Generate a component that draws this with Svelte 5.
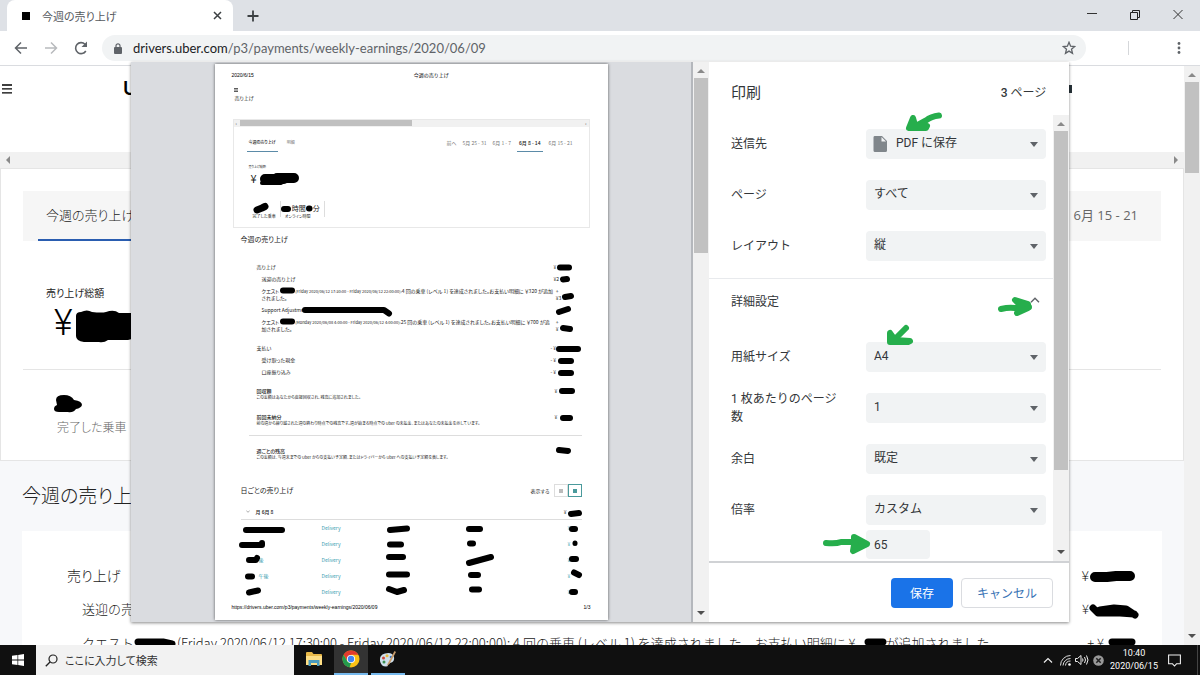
<script>
  const basicSettings = [
    { id: 'dest', label: '送信先', value: 'PDF に保存', icon: true },
    { id: 'pages', label: 'ページ', value: 'すべて' },
    { id: 'layout', label: 'レイアウト', value: '縦' }
  ];
  const advancedSettings = [
    { id: 'paper', label: '用紙サイズ', value: 'A4' },
    { id: 'persheet', label: '1 枚あたりのページ数', value: '1' },
    { id: 'margin', label: '余白', value: '既定' },
    { id: 'scale', label: '倍率', value: 'カスタム' }
  ];
  const trips = ['', '', '後', '午後', ''];

  // Redaction strokes: [path, stroke width]
  const sheetMarks = [
    ['M265 179 H284 M277 178 H294', 10], ['M262 183 H281', 4],
    ['M257 210 L262 208 L265 206.500', 7], ['M284 209 H288', 6], ['M309 208.500 h0.500', 6],
    ['M560 267.500 H569', 6], ['M563 279.500 L567 279', 6], ['M283 290.500 H292', 6],
    ['M565 297 L571 296', 6], ['M305 310 H384 L389 313.500', 6], ['M559 312 L568 309', 6],
    ['M283 321.500 H292', 6], ['M563 328 L570 329', 6], ['M559 349 H578', 6],
    ['M561 361 H571', 6], ['M561 373 H571', 6], ['M562 391 H572', 6],
    ['M563 418 H570', 6], ['M559 450 L568 451', 6], ['M571 514 L579 513', 6],
    ['M246 530 H282', 6], ['M242 545 H262 V543', 6], ['M249 560 H256 L257 558', 6],
    ['M248 576.500 H252', 6], ['M249 592.500 L258 590.500', 6],
    ['M390 530 L407 528.500', 6], ['M390 544.500 H401', 6], ['M389 557 H403', 6],
    ['M389 574.500 H407', 6], ['M389 589 L397 592 L404 590', 6],
    ['M469 529 H480', 6], ['M470 543.500 H473', 6], ['M469 563 L480 560 L491 557', 6],
    ['M471 575 H478', 6], ['M472 589.500 H479', 6],
    ['M572 529 H575', 6], ['M575 543 v0.500', 5], ['M572 559 H576', 6],
    ['M574 572.500 L579 575', 6], ['M572 592 L575 592', 6]
  ];
</script>

{#snippet tri(dir, color)}
  <svg class="tri {dir}" width="8" height="8" viewBox="0 0 8 8" aria-hidden="true"><path d="M0 6 4 2l4 4z" fill={color} /></svg>
{/snippet}

{#snippet field(s)}
  <div class="field">
    <label for={s.id}>{s.label}</label>
    <div class="pick" class:with-icon={s.icon}>
      {#if s.icon}
        <svg class="doc" width="14" height="16" viewBox="0 0 14 16" aria-hidden="true"><path d="M2 0h7l5 5v9.500a1.500 1.500 0 0 1-1.500 1.500h-10.500a1.500 1.500 0 0 1-1.500-1.500v-13a1.500 1.500 0 0 1 1-1.500z" fill="#80868b" /><path d="M8.500 1v4.500h4.500z" fill="#f1f3f4" /></svg>
      {/if}
      <select id={s.id}><option>{s.value}</option></select>
      <svg class="caret" width="8" height="5" viewBox="0 0 8 5" aria-hidden="true"><path d="M0 0h8L4 5z" fill="#5f6368" /></svg>
    </div>
  </div>
{/snippet}

<div class="screen">
  <header>
    <div class="tabstrip">
      <div class="tab">
        <span class="favicon"></span>
        <span class="tab-title">今週の売り上げ</span>
        <button aria-label="タブを閉じる"><svg width="9" height="9" viewBox="0 0 9 9"><path d="M1 1l7 7M8 1l-7 7" stroke="#3c4043" stroke-width="1.500" /></svg></button>
      </div>
      <button class="new-tab" aria-label="新しいタブ"><svg width="12" height="12" viewBox="0 0 12 12"><path d="M6 .5v11M.5 6h11" stroke="#3c4043" stroke-width="1.800" /></svg></button>
      <div class="window-buttons">
        <button aria-label="最小化"><svg width="12" height="12" viewBox="0 0 12 12"><path d="M1 3.500h10" stroke="#333" /></svg></button>
        <button aria-label="元に戻す"><svg width="12" height="12" viewBox="0 0 12 12"><path d="M1.500 2.500h7v7h-7zM3.500 2.500v-2h7v7h-2" fill="none" stroke="#222" /></svg></button>
        <button aria-label="閉じる"><svg width="12" height="12" viewBox="0 0 12 12"><path d="M1.500 0l9 9M10.500 0l-9 9" stroke="#333" /></svg></button>
      </div>
    </div>
    <div class="toolbar">
      <nav>
        <button aria-label="戻る"><svg width="14" height="14" viewBox="0 0 14 14"><path d="M13 7H2M7 1.500 1.500 7 7 12.500" fill="none" stroke="#5f6368" stroke-width="1.500" /></svg></button>
        <button aria-label="進む"><svg width="14" height="14" viewBox="0 0 14 14"><path d="M1 7h11M7 1.500 12.500 7 7 12.500" fill="none" stroke="#b8babd" stroke-width="1.500" /></svg></button>
        <button aria-label="再読み込み"><svg width="14" height="14" viewBox="0 0 14 14"><path d="M11.800 10A5.500 5.500 0 1 1 11 3.200l1 1" fill="none" stroke="#5f6368" stroke-width="1.600" /><path d="M13 .5v5.500H7.500z" fill="#5f6368" /></svg></button>
      </nav>
      <div class="omnibox">
        <svg width="8" height="11" viewBox="0 0 8 11" aria-hidden="true"><rect y="4" width="8" height="7" rx="1" fill="#5f6368" /><path d="M2 4.500V2.800a2 2 0 0 1 4 0v1.700" fill="none" stroke="#5f6368" stroke-width="1.200" /></svg>
        <span class="url"><b>drivers.uber.com</b>/p3/payments/weekly-earnings/2020/06/09</span>
        <button aria-label="ブックマーク"><svg width="14" height="14" viewBox="0 0 14 14"><path d="M7 1.300 8.600 5.200l4.100.3-3.200 2.700 1 4.100L7 10.100l-3.500 2.200 1-4.100-3.200-2.700 4.100-.3z" fill="none" stroke="#5f6368" stroke-width="1.300" /></svg></button>
      </div>
      <span class="sep"></span>
      <button aria-label="メニュー"><svg width="4" height="14" viewBox="0 0 4 14"><g fill="#5f6368"><circle cx="2" cy="2.500" r="1.400" /><circle cx="2" cy="7" r="1.400" /><circle cx="2" cy="11.500" r="1.400" /></g></svg></button>
    </div>
  </header>

  <main class="viewport">
    <div class="site">
      <div class="site-head">
        <svg width="10" height="10" viewBox="0 0 10 10" aria-hidden="true"><path d="M0 1h10M0 4.900h10M0 8.800h10" stroke="#000" stroke-width="1.300" /></svg>
        <span class="logo">U</span>
        <span class="badge"></span>
      </div>
      <div class="hscroll">{@render tri('left', '#8a8a8a')}{@render tri('right', '#8a8a8a')}</div>
      <section class="summary">
        <div class="tabs"><span class="current">今週の売り上げ</span><span class="week">6月 15 - 21</span></div>
        <p class="total-label">売り上げ総額</p>
        <p class="total">¥</p>
        <div class="rides">完了した乗車</div>
      </section>
      <h2>今週の売り上げ</h2>
      <section class="details">
        <div><span>売り上げ</span><span class="yen">¥</span></div>
        <div class="sub"><span>送迎の売り上げ</span><span class="yen">¥</span></div>
        <div class="sub"><span>クエスト<i class="gap"></i>(Friday 2020/06/12 17:30:00 - Friday 2020/06/12 22:00:00): 4 回の乗車 (レベル 1) を達成されました。お支払い明細に ¥<i class="gap short"></i>が追加されました</span><span class="yen">+ ¥</span></div>
      </section>
      <svg class="marks" width="1184" height="579" viewBox="0 66 1184 579" aria-hidden="true">
        <path d="M76 316q0-4 5-4 6-3 11 0 10 1 14 0 8-3 13 1h13v26l-4 1h-20q-4 3-9 2H84q-8-1-8-6z" />
        <path d="M56 400q0-5 8-5 7 0 10 5 8 1 8 5-1 3-6 4-3 4-8 3h-9q-5 0-5-3 0-3 3-4z" />
        <g fill="none" stroke="#000" stroke-linecap="round" stroke-linejoin="round">
          <path stroke-width="10" d="M1095 577h12l9-1h14" />
          <path stroke-width="7" d="M1093 608l5 5h22l14 1M1100 610l14-2 12 1 9 6" />
          <path stroke-width="7" d="M138 642h25l9 2M868 642h15M1112 642l20 0" />
        </g>
      </svg>
    </div>
    <div class="vscroll">{@render tri('up', '#8a8a8a')}<div class="thumb site-thumb"></div>{@render tri('down', '#505050')}</div>
  </main>

  <footer class="taskbar">
    <button class="start" aria-label="スタート"><svg width="12" height="12" viewBox="0 0 12 12"><path d="M0 1.700 5.500 1v4.600H0zM6.200.9 12 0v5.600H6.200zM0 6.400h5.500V11L0 10.300zM6.200 6.400H12V12l-5.800-.9z" fill="#fff" /></svg></button>
    <label class="search">
      <svg width="13" height="13" viewBox="0 0 13 13" aria-hidden="true"><circle cx="8" cy="5" r="4" fill="none" stroke="#222" stroke-width="1.200" /><path d="M5 8 .8 12.200" stroke="#222" stroke-width="1.300" /></svg>
      <input type="text" placeholder="ここに入力して検索" />
    </label>
    <div class="apps">
      <button aria-label="エクスプローラー"><svg width="16" height="14" viewBox="0 0 16 14"><path d="M0 1q0-1 1-1h5l1.500 2H15q1 0 1 1v10H0z" fill="#e9b949" /><path d="M0 4h16v9H0z" fill="#ffdf85" /><path d="M2.500 14V8h11v6H11v-3H5v3z" fill="#4a9bbf" /></svg></button>
      <button class="active" aria-label="Chrome"><svg width="18" height="18" viewBox="0 0 18 18"><circle cx="9" cy="9" r="8.500" fill="#fbc116" /><path d="M1.600 4.800A8.500 8.500 0 0 1 16.400 4.800H9L5.400 11z" fill="#e33b2e" /><path d="M1.600 4.800 5.400 11.200 9 13.200 7.500 17.400A8.500 8.500 0 0 1 1.600 4.800z" fill="#249a4d" /><circle cx="9" cy="9" r="4.100" fill="#fff" /><circle cx="9" cy="9" r="3.200" fill="#4285f4" /></svg></button>
      <button class="open" aria-label="ペイント"><svg width="18" height="18" viewBox="0 0 18 18"><path d="M1 11Q0 5 6 3.500 13 1.500 15 7q1 5-4 6-2 0-2 2 0 1.500-2 1.500-5 0-6-5.500z" fill="#cfe0ec" /><circle cx="4.500" cy="8" r="1.500" fill="#d0493c" /><circle cx="8" cy="5.800" r="1.500" fill="#e8b93e" /><circle cx="5" cy="12" r="1.500" fill="#3c8f53" /><circle cx="12" cy="7" r="1.300" fill="#3976c2" /><path d="M15.500 1 9 13l-1.500 3 3-2L17 2z" fill="#c79b6a" /></svg></button>
    </div>
    <div class="tray">
      <svg class="expand" width="10" height="6" viewBox="0 0 10 6" aria-hidden="true"><path d="M1 5.500 5 1.500l4 4" fill="none" stroke="#eee" stroke-width="1.200" /></svg>
      <svg width="11" height="11" viewBox="0 0 11 11" aria-hidden="true"><g fill="none" stroke="#ddd"><path d="M.5 10.500A10 10 0 0 1 10.500.5M3 10.500A7.500 7.500 0 0 1 10.500 3.500M5.500 10.500a5 5 0 0 1 5-4.500" /></g><circle cx="9.500" cy="9.500" r="1.300" fill="#fff" /></svg>
      <svg width="14" height="12" viewBox="0 0 14 12" aria-hidden="true"><g fill="none" stroke="#eee"><path d="M.5 4.500h2L6 1.500v9l-3.500-3h-2zM7.500 4.500q1 1.500 0 3M9.500 3q2 3 0 6M11.500 1.500q3 4.500 0 9" /></g></svg>
      <svg width="11" height="11" viewBox="0 0 11 11" aria-hidden="true"><circle cx="5.500" cy="5.500" r="5.300" fill="#999" /><path d="M3.300 3.300l4.400 4.400M7.700 3.300 3.300 7.700" stroke="#222" stroke-width="1.500" /></svg>
      <div class="clock">10:40<br />2020/06/15</div>
      <svg width="13" height="13" viewBox="0 0 13 13" aria-hidden="true"><path d="M.6 1h11.800v8.800H8.500L6.500 12l-2-2.200H.6z" fill="none" stroke="#eee" stroke-width="1.100" /></svg>
      <span class="peek"></span>
    </div>
  </footer>

  <div class="overlay">
    <div class="dialog" role="dialog" aria-label="印刷">
      <div class="preview">
        <article class="sheet">
          <div class="running"><span>2020/6/15</span><span class="doc-title">今週の売り上げ</span></div>
          <div class="menu-line"><svg width="4" height="4" viewBox="0 0 4 4" aria-hidden="true"><path d="M0 .5h4M0 2h4M0 3.500h4" stroke="#333" stroke-width=".8" /></svg></div>
          <div class="crumb">売り上げ</div>
          <div class="frame">
            <div class="mini-scroll"><i>‹</i><span></span><i>›</i></div>
            <div class="mini-tabs">
              <b>今週の売り上げ</b><span>明細</span>
              <div class="weeks"><span>前へ</span><span>5月 25 - 31</span><span>6月 1 - 7</span><b>6月 8 - 14</b><span>6月 15 - 21</span></div>
            </div>
            <div class="mini-label">売り上げ総額</div>
            <div class="mini-total">¥</div>
            <div class="stats">
              <div><strong>&nbsp;</strong><span>完了した乗車</span></div>
              <div><strong><i></i>時間<i></i>分</strong><span>オンライン時間</span></div>
            </div>
          </div>
          <h3>今週の売り上げ</h3>
          <div class="lines">
            <div class="line"><span>売り上げ</span><span>¥</span></div>
            <div class="line in"><span>送迎の売り上げ</span><span>¥2</span></div>
            <div class="line in"><span>クエスト<i class="hole"></i><em>(Friday 2020/06/12 17:30:00 - Friday 2020/06/12 22:00:00): </em>4 回の乗車 (レベル 1) を達成されました。お支払い明細に ￥320 が追加<br />されました。</span><span>&nbsp;&nbsp;+<br />&nbsp;&nbsp;¥3</span></div>
            <div class="line in"><span>Support Adjustment</span><span></span></div>
            <div class="line in"><span>クエスト<i class="hole"></i><em>(Monday 2020/06/08 4:00:00 - Friday 2020/06/12 4:00:00): </em>25 回の乗車 (レベル 1) を達成されました。お支払い明細に ￥700 が追<br />加されました。</span><span>&nbsp;&nbsp;+<br />&nbsp;&nbsp;¥</span></div>
          </div>
          <div class="lines">
            <div class="line"><span>支払い</span><span class="neg">- ¥</span></div>
            <div class="line in"><span>受け取った現金</span><span class="neg">- ¥</span></div>
            <div class="line in"><span>口座振り込み</span><span class="neg">- ¥</span></div>
          </div>
          <div class="lines">
            <div class="line"><span><b>回収額</b><small>この金額はあなたから直接回収され、残高に追加されました。</small></span><span>&nbsp;¥</span></div>
          </div>
          <div class="lines">
            <div class="line"><span><b>前回未納分</b><small>前の週から繰り越された週の終わり時点での残高です。週が始まる時点での Uber の未払金、またはあなたの未払金を示しています。</small></span><span>&nbsp;¥</span></div>
          </div>
          <div class="lines ruled">
            <div class="line"><span><b>週ごとの残高</b><small>この金額は、今週末までの Uber からの支払い予定額、またはドライバーから Uber への支払い予定額を表します。</small></span><span></span></div>
          </div>
          <div class="daily-head">
            <h3>日ごとの売り上げ</h3>
            <span>表示する</span>
            <div class="toggle"><button aria-label="カード"><i></i></button><button class="on" aria-label="リスト"><i></i></button></div>
          </div>
          <div class="day"><svg width="4" height="3" viewBox="0 0 4 3" aria-hidden="true"><path d="M.3.500 2 2.300 3.700.5" fill="none" stroke="#777" stroke-width=".6" /></svg><b>月 6月 8</b><span>¥</span></div>
          <table>
            <tbody>
              {#each trips as t}
                <tr><td>{t}</td><td>Delivery</td><td>¥</td></tr>
              {/each}
            </tbody>
          </table>
          <div class="running foot"><span>https://drivers.uber.com/p3/payments/weekly-earnings/2020/06/09</span><span>1/3</span></div>
          <svg class="marks" width="393" height="556" viewBox="215 64 393 556" aria-hidden="true">
            <g fill="none" stroke="#000" stroke-linecap="round" stroke-linejoin="round">
              {#each sheetMarks as [d, w]}<path {d} stroke-width={w} />{/each}
            </g>
          </svg>
        </article>
      </div>
      <div class="vscroll inner">{@render tri('up', '#8a8a8a')}<div class="thumb preview-thumb"></div>{@render tri('down', '#505050')}</div>
      <div class="settings">
        <div class="settings-head"><h1>印刷</h1><span><b>3</b> ページ</span></div>
        <div class="settings-body">
          <div class="form">
            <div class="group">{#each basicSettings as s}{@render field(s)}{/each}</div>
            <button class="more">詳細設定<svg width="10" height="6" viewBox="0 0 10 6" aria-hidden="true"><path d="M1 5.300 5 1.300l4 4" fill="none" stroke="#5f6368" stroke-width="1.400" /></svg></button>
            <div class="group">{#each advancedSettings as s}{@render field(s)}{/each}</div>
            <input class="percent" type="text" value="65" aria-label="倍率 (%)" />
          </div>
          <div class="vscroll">{@render tri('up', '#8a8a8a')}<div class="thumb form-thumb"></div>{@render tri('down', '#505050')}</div>
        </div>
        <div class="actions"><button class="save">保存</button><button class="cancel">キャンセル</button></div>
        <svg class="marks" width="360" height="560" viewBox="709 62 360 560" aria-hidden="true">
          <g fill="#26ae4c" stroke="#26ae4c" stroke-width="6" stroke-linecap="round" stroke-linejoin="round">
            <path fill="none" d="M939 115.500q-8 1-13 5l-11 6" /><path d="M913 118l-4 10h17l1-2-12-1z" />
            <path fill="none" d="M1001 309q8-2 14-1l14-1" /><path d="M1015 300l13 4v4l-11 5 4-7z" />
            <path fill="none" d="M906 328l-9 9-5 3" /><path d="M890 333v9h18l2-1-15-1z" />
            <path fill="none" d="M826 543q10 1 15-1h20" /><path d="M854 537l13 7-14 7 1-6z" />
          </g>
        </svg>
      </div>
    </div>
  </div>
</div>

<style>
  :global(body) { margin: 0; }
  .screen, .screen * { box-sizing: border-box; }
  .screen { position: relative; display: flex; flex-direction: column; height: 100vh; overflow: hidden; background: #fff; color: #222; font-family: Roboto, "Noto Sans CJK JP", sans-serif; font-size: 12px; font-feature-settings: "palt"; }
  button, input, select { font: inherit; color: inherit; border: 0; padding: 0; margin: 0; background: none; font-feature-settings: inherit; }
  button { display: inline-flex; align-items: center; justify-content: center; }
  h1, h2, h3, p { margin: 0; font-weight: 400; }
  svg { display: block; flex: none; }
  .marks { position: absolute; top: 0; left: 0; pointer-events: none; }
  .tri.left { transform: rotate(-90deg); }
  .tri.right { transform: rotate(90deg); }
  .tri.down { transform: rotate(180deg); }

  .tabstrip { display: flex; align-items: center; height: 31px; padding-left: 7px; background: #dee1e6; }
  .tab { display: flex; align-items: center; gap: 12px; width: 226px; height: 31px; padding: 0 11px 0 15px; background: #fff; border-radius: 8px 8px 0 0; font-size: 11px; color: #55595d; }
  .favicon { width: 8px; height: 8px; background: #000; }
  .tab-title { flex: 1; }
  .new-tab { margin-left: 14px; }
  .window-buttons { display: flex; gap: 31px; margin-left: auto; padding-right: 16px; }
  .toolbar { display: flex; align-items: center; height: 35px; padding: 0 19px 0 14px; border-bottom: 1px solid #dadce0; }
  nav { display: flex; gap: 16px; }
  .omnibox { display: flex; align-items: center; flex: 1; height: 26px; margin-left: 14px; padding: 0 10px 0 12px; background: #f1f3f4; border-radius: 13px; }
  .url { flex: 1; margin-left: 11px; font-family: Lato, sans-serif; font-size: 13px; color: #5f6368; }
  .url b { font-weight: 400; color: #202124; }
  .sep { width: 1px; height: 14px; margin: 0 48px 0 42px; background: #d5d7da; }

  .viewport { display: flex; flex: 1; min-height: 0; overflow: hidden; }
  .site { position: relative; flex: 1; min-width: 0; overflow: hidden; background: #f7f8fa; }
  .vscroll { display: flex; flex-direction: column; align-items: center; width: 16px; padding: 5px 1px; background: #f1f1f1; }
  .vscroll .tri.down { margin-top: auto; }
  .thumb { align-self: stretch; margin-top: 3px; background: #c1c1c1; }
  .site-thumb { height: 91px; }
  .site-head { display: flex; height: 86px; padding: 17px 112px 0 2px; background: #fff; }
  .site-head svg { margin-top: 1px; }
  .logo { margin-left: 111px; font-family: Inter, sans-serif; font-size: 19px; font-weight: 600; line-height: 12px; color: #000; }
  .badge { width: 8px; height: 8px; margin: 2px 0 0 auto; background: #273238; }
  .hscroll { display: flex; justify-content: space-between; align-items: center; height: 16px; padding: 0 4px; background: #f1f1f1; }
  .summary { height: 293px; padding: 22px 22px 0; background: #fff; border: 1px solid #e5e5e5; font-family: "Noto Sans CJK JP", sans-serif; font-weight: 300; }
  .tabs { display: flex; align-items: stretch; justify-content: space-between; height: 50px; padding: 0 23px 0 15px; background: #f6f6f6; font-size: 13px; line-height: 48px; }
  .current { padding: 0 8px; border-bottom: 2px solid #2a5db0; }
  .week { color: #666; font-family: "Open Sans", "Noto Sans CJK JP", sans-serif; font-weight: 400; }
  .total-label { margin: 44px 0 0 23px; font-size: 10px; line-height: 16px; }
  .total { margin-left: 31px; font-family: Roboto, sans-serif; font-size: 36px; font-weight: 300; line-height: 44px; color: #000; }
  .rides { margin-top: 24px; padding: 48px 0 0 34px; border-top: 1px solid #e5e5e5; font-size: 12px; line-height: 18px; color: #666; }
  .site h2 { padding: 19px 22px 21px; font-family: "Noto Sans CJK JP", sans-serif; font-size: 19px; font-weight: 300; line-height: 30px; }
  .details { margin: 0 22px; padding: 27px 0 0 45px; background: #fff; font-family: "Noto Sans CJK JP", sans-serif; font-size: 14px; font-weight: 300; line-height: 34px; white-space: nowrap; }
  .details div { display: flex; justify-content: space-between; padding-right: 73px; }
  .details div:last-child { padding-right: 58px; }
  .details .sub { padding-left: 15px; font-size: 13px; font-feature-settings: normal; }
  .gap { display: inline-block; width: 43px; }
  .gap.short { width: 30px; }

  .taskbar { display: flex; align-items: center; height: 30px; background: #101010; color: #fff; }
  .start { width: 36px; height: 30px; }
  .search { display: flex; align-items: center; gap: 7px; width: 258px; height: 30px; padding-left: 9px; background: #f2f2f2; color: #222; }
  .search input { width: 200px; font-family: "Noto Sans CJK JP", sans-serif; font-size: 11px; }
  .search input::placeholder { color: #333; }
  .apps { display: flex; gap: 3px; padding-left: 3px; }
  .apps button { width: 34px; height: 30px; border-bottom: 2px solid transparent; }
  .apps .active { background: #333; border-color: #76b9ed; }
  .apps .open { border-color: #76b9ed; }
  .tray { display: flex; align-items: center; gap: 4px; margin-left: auto; padding-right: 2px; }
  .expand { margin-right: 3px; }
  .clock { width: 50px; margin: 0 5px 0 1px; font-family: Roboto, sans-serif; font-size: 9px; line-height: 13px; text-align: center; }
  .peek { width: 1px; height: 30px; margin-left: 12px; background: #444; }

  .overlay { position: absolute; inset: 62px 0 auto; display: flex; justify-content: center; }
  .dialog { display: grid; grid-template-columns: 1fr 18px 360px; width: 938px; height: 560px; background: #fff; box-shadow: 0 1px 3px #0007; }
  .preview { display: flex; justify-content: center; padding-top: 2px; background: #dadce0; overflow: hidden; }
  .inner { width: 18px; border-left: 2px solid #b4b7bc; }
  .preview-thumb { height: 175px; }

  .settings { position: relative; display: flex; flex-direction: column; min-height: 0; color: #333639; }
  .settings-head { display: flex; align-items: center; justify-content: space-between; height: 53px; padding: 5px 23px 0 22px; }
  .settings-head b { font-weight: 500; }
  h1 { font-size: 15px; }
  .settings-body { display: flex; flex: 1; min-height: 0; overflow: hidden; border-bottom: 2px solid #d0d2d5; }
  .form { flex: 1; font-feature-settings: normal; }
  .form-thumb { height: 339px; }
  .group { display: grid; row-gap: 21px; padding: 14px 7px 0 22px; }
  .field { display: grid; grid-template: 30px / 1fr 180px; column-gap: 22px; align-items: center; }
  .field label { line-height: 18px; }
  .pick { position: relative; height: 30px; }
  select { appearance: none; width: 100%; height: 30px; padding: 0 24px 2px 8px; border-radius: 4px; background: #f1f3f4; }
  .with-icon select { padding-left: 30px; }
  .doc { position: absolute; left: 7px; top: 7px; }
  .caret { position: absolute; right: 8px; top: 13px; }
  .more { display: flex; justify-content: space-between; width: 100%; height: 43px; margin-top: 17px; padding: 0 13px 0 22px; border-top: 1px solid #e8eaed; }
  .more + .group { padding-top: 21px; }
  .percent { display: block; width: 64px; height: 29px; margin: 5px 0 0 157px; padding: 0 8px; border-radius: 4px; background: #f1f3f4; }
  .actions { display: flex; justify-content: flex-end; align-items: center; gap: 8px; height: 59px; padding-right: 16px; }
  .actions button { height: 30px; border-radius: 4px; }
  .save { width: 62px; background: #1a73e8; color: #fff; }
  .actions .cancel { width: 92px; border: 1px solid #dadce0; color: #3973b5; font-feature-settings: normal; }

  .sheet { position: relative; width: 393px; height: 556px; padding: 8px 17px 0; background: #fff; box-shadow: 0 0 3px #0009; font-size: 5px; line-height: 7px; color: #222; font-family: "Noto Sans CJK JP", sans-serif; white-space: nowrap; }
  .sheet i, .sheet em { font-style: normal; }
  .sheet em { font-size: 4px; line-height: 4px; }
  .running { display: flex; height: 6px; font-family: "Liberation Sans", "Noto Sans CJK JP", sans-serif; font-feature-settings: normal; line-height: 6px; color: #000; }
  .doc-title { margin-left: 160px; }
  .menu-line { padding: 10px 2px 2px; }
  .crumb { padding-left: 3px; }
  .frame { height: 109px; margin: 18px 1px 0; border: 1px solid #e8e8e8; }
  .mini-scroll { display: flex; justify-content: space-between; height: 7px; background: #f1f1f1; color: #555; padding: 0 2px; line-height: 5px; }
  .mini-scroll span { width: 172px; margin: 0 auto 1px 3px; background: #c0c0c0; }
  .mini-tabs { display: flex; gap: 9px; margin-top: 12px; padding: 0 16px 0 13px; font-size: 4px; color: #777; }
  .mini-tabs b { height: 13px; padding: 0 2px; border-bottom: 1px solid #5b8ba8; font-weight: 500; color: #222; }
  .weeks { display: flex; gap: 6px; margin-left: auto; font-size: 5px; }
  .mini-label { padding: 13px 0 0 15px; font-size: 3px; line-height: 5px; }
  .mini-total { padding: 1px 0 0 17px; font-size: 11px; line-height: 14px; }
  .stats { display: flex; margin: 16px 0 0 15px; }
  .stats div { height: 16px; padding: 0 4px; border-right: 1px solid #ddd; }
  .stats div + div { width: 44px; }
  .stats strong { display: flex; height: 12px; font-size: 7px; font-weight: 400; line-height: 14px; }
  .stats strong i { width: 7px; }
  .stats span { display: block; font-size: 4px; line-height: 6px; }
  h3 { margin: 7px 0 0 9px; font-size: 7px; line-height: 9px; }
  .lines { display: grid; row-gap: 5px; padding: 12px 9px 0 8px; }
  h3 + .lines { padding-top: 19px; }
  .line { display: grid; grid-template-columns: minmax(0, 1fr) 28px; padding-left: 17px; }
  .line.in { padding-left: 22px; }
  .line b { display: block; font-weight: 500; }
  .neg { margin-left: -3px; }
  small { display: block; font-size: 4px; }
  .hole { display: inline-block; width: 16px; }
  .ruled { margin: 8px 9px 0 17px; padding: 11px 0 0; border-top: 1px solid #ddd; }
  .ruled .line { padding-left: 8px; }
  .daily-head { display: flex; align-items: center; height: 13px; margin-top: 23px; padding: 0 9px; }
  .daily-head h3 { margin: 0 auto 0 0; }
  .toggle { display: flex; margin-left: 4px; }
  .toggle button { width: 14px; height: 13px; border: 1px solid #ddd; }
  .toggle .on { border-color: #4a9a9c; }
  .toggle i { width: 4px; height: 4px; background: #bbb; }
  .toggle .on i { background: #4a9a9c; }
  .day { display: flex; align-items: center; gap: 6px; height: 23px; margin: 0 9px; padding: 7px 15px 0 5px; border-bottom: 1px solid #ddd; }
  .day b { font-weight: 500; }
  .day span { margin-left: auto; }
  table { width: 341px; margin-left: 9px; border-collapse: collapse; color: #3b9db0; }
  tr { height: 16px; }
  td { padding: 0 0 2px; }
  td:first-child { width: 81px; padding-left: 18px; }
  td:last-child { width: 14px; }
  .foot { justify-content: space-between; margin-top: 4px; }
</style>
